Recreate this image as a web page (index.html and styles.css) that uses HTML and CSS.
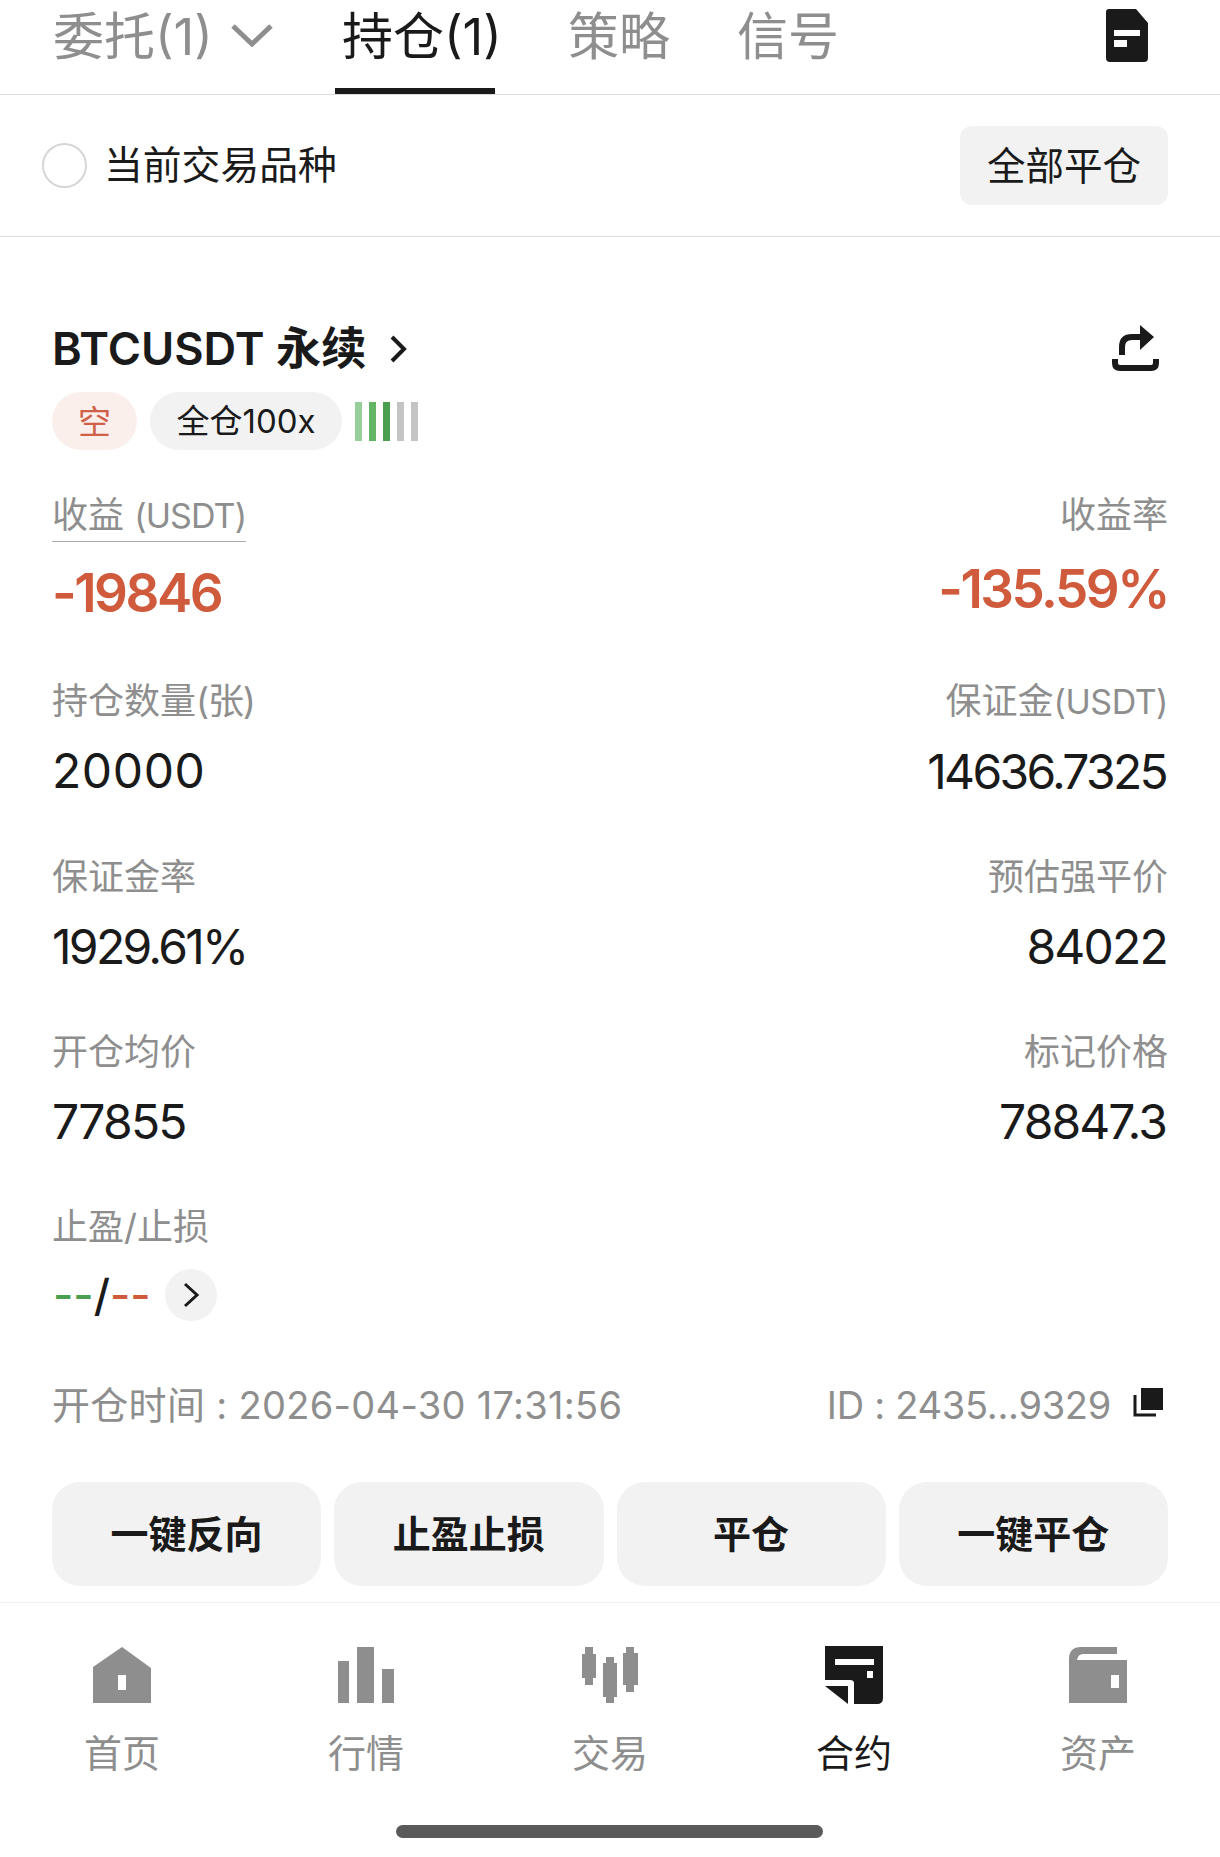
FILE: index.html
```html
<!DOCTYPE html>
<html lang="zh-CN">
<head>
<meta charset="utf-8">
<title>持仓</title>
<link rel="stylesheet" href="styles.css">
</head>
<body>
<div class="page">
  <header class="tabs">
    <div class="tab tab-orders">委托(1)
      <svg class="tab-caret" viewBox="0 0 42 24"><path d="M2 3 L21 21 L40 3" fill="none" stroke="#8e8e8e" stroke-width="5"/></svg>
    </div>
    <div class="tab tab-active">持仓(1)</div>
    <div class="tab tab-strategy">策略</div>
    <div class="tab tab-signal">信号</div>
    <svg class="doc-icon" viewBox="0 0 42 53"><path d="M3 0 H30 L42 14 V49 Q42 53 38 53 H4 Q0 53 0 49 V3 Q0 0 3 0 Z M8 21 V27 H34 V21 Z M8 31 V38 H21 V31 Z" fill="#1a1a1a" fill-rule="evenodd"/></svg>
  </header>

  <section class="filter">
    <div class="filter-left"><span class="radio"></span><span class="filter-text">当前交易品种</span></div>
    <button class="close-all">全部平仓</button>
  </section>

  <main class="card">
    <div class="title-row">
      <div class="title"><span>BTCUSDT 永续</span>
        <svg class="title-chev" viewBox="0 0 18 28"><path d="M3 2 L15 14 L3 26" fill="none" stroke="#1a1a1a" stroke-width="4"/></svg>
      </div>
      <svg class="share" viewBox="0 0 47 46"><path d="M10 30 V22 Q10 12 20 12 H30" fill="none" stroke="#1a1a1a" stroke-width="6"/><path d="M28 0 L42 12 L28 25 Z" fill="#1a1a1a"/><path d="M3 34 V38 Q3 43 8 43 H39 Q44 43 44 38 V34" fill="none" stroke="#1a1a1a" stroke-width="6"/></svg>
    </div>

    <div class="tags">
      <span class="tag tag-short">空</span>
      <span class="tag tag-lev">全仓100x</span>
      <span class="bars">
        <i class="bar b1"></i><i class="bar b2"></i><i class="bar b3"></i><i class="bar b4"></i><i class="bar b4"></i>
      </span>
    </div>

    <div class="pnl">
      <div>
        <div class="label label-under">收益 <span class="lat">(USDT)</span></div>
        <div class="big">-19846</div>
      </div>
      <div class="right">
        <div class="label">收益率</div>
        <div class="big big-right">-135.59%</div>
      </div>
    </div>

    <div class="grid">
      <div><div class="label">持仓数量<span class="paren">(张)</span></div><div class="value v-wide">20000</div></div>
      <div class="right"><div class="label">保证金<span class="lat">(USDT)</span></div><div class="value v-tight">14636.7325</div></div>
      <div><div class="label">保证金率</div><div class="value v-tight">1929.61%</div></div>
      <div class="right"><div class="label">预估强平价</div><div class="value v-mid">84022</div></div>
      <div><div class="label">开仓均价</div><div class="value v-low">77855</div></div>
      <div class="right"><div class="label">标记价格</div><div class="value v-semi">78847.3</div></div>
      <div>
        <div class="label">止盈/止损</div>
        <div class="tp">
          <span class="tp-val"><span class="green">--</span><span class="slash">/</span><span class="red">--</span></span>
          <span class="tp-btn"><svg class="tp-chev" viewBox="0 0 17 26"><path d="M2 2 L14 13 L2 24" fill="none" stroke="#1a1a1a" stroke-width="3"/></svg></span>
        </div>
      </div>
    </div>

    <div class="meta">
      <span class="meta-time">开仓时间 : 2026-04-30 17:31:56</span>
      <span class="meta-id"><span>ID : 2435...9329</span>
        <svg class="copy" viewBox="0 0 30 29"><path d="M8 0 H30 V22 H8 Z" fill="#1a1a1a"/><path d="M2 7 V27 H23" fill="none" stroke="#1a1a1a" stroke-width="3"/></svg>
      </span>
    </div>

    <div class="actions">
      <button class="act">一键反向</button>
      <button class="act">止盈止损</button>
      <button class="act">平仓</button>
      <button class="act">一键平仓</button>
    </div>
  </main>

  <nav class="nav">
    <div class="nav-items">
      <div class="nav-item">
        <svg class="nav-icon" viewBox="0 0 58 58"><path d="M0 21 L29 1 L58 22 V57 H0 Z M25 29 V44 H33 V29 Z" fill="#8e8e8e" fill-rule="evenodd"/></svg>
        <span>首页</span>
      </div>
      <div class="nav-item">
        <svg class="nav-icon" viewBox="0 0 58 58"><path d="M1 15 H12 V57 H1 Z M20 1 H37 V57 H20 Z M45 23 H57 V57 H45 Z" fill="#8e8e8e"/></svg>
        <span>行情</span>
      </div>
      <div class="nav-item">
        <svg class="nav-icon" viewBox="0 0 58 58"><path d="M4 1 H12 V8 H15 V32 H12 V39 H4 V32 H1 V8 H4 Z M25 11 H33 V17 H36 V51 H33 V57 H25 V51 H22 V17 H25 Z M45 1 H53 V7 H57 V39 H53 V46 H45 V39 H42 V7 H45 Z" fill="#8e8e8e"/></svg>
        <span>交易</span>
      </div>
      <div class="nav-item nav-active">
        <svg class="nav-icon" viewBox="0 0 58 58"><path d="M0 0 H58 V52 Q58 58 52 58 H29 V37 Q29 34 25 34 H0 Z M10 13 V19 H49 V13 Z M42 25 V32 H48 V25 Z" fill="#1a1a1a" fill-rule="evenodd"/><path d="M0 40 H23 V58 Z" fill="#1a1a1a"/></svg>
        <span>合约</span>
      </div>
      <div class="nav-item">
        <svg class="nav-icon" viewBox="0 0 58 58"><path d="M0 57 V13 Q0 1 12 1 H48 V8 H14 Q9 8 8 14 H58 V57 Z M42 29 V42 H50 V29 Z" fill="#8e8e8e" fill-rule="evenodd"/></svg>
        <span>资产</span>
      </div>
    </div>
    <div class="home-bar"></div>
  </nav>
</div>
</body>
</html>
```

FILE: styles.css
```css
* { box-sizing: border-box; }
html, body { margin: 0; padding: 0; background: #fff; }
body {
  font-family: Inter, "Noto Sans CJK SC", sans-serif;
  color: #1a1a1a;
}
.page { width: 1220px; height: 1857px; overflow: hidden; }

.tabs {
  height: 95px;
  border-bottom: 1px solid #dcdcdc;
  display: flex;
  padding-left: 53px;
}
.tab {
  font-size: 51px;
  line-height: 60px;
  color: #8e8e8e;
  white-space: nowrap;
  display: flex;
  align-items: center;
  height: 69px;
  padding-top: 5px;
  font-family: Inter, "Noto Sans CJK SC", sans-serif;
}
.tab-caret { width: 42px; height: 24px; margin-left: 18px; margin-top: -4px; }
.tab-orders { width: 282px; }
.tab-active { color: #1a1a1a; width: 233px; position: relative; padding-left: 7px; }
.tab-active::after {
  content: "";
  position: absolute;
  left: 0;
  bottom: -25px;
  width: 160px;
  height: 6px;
  background: #1a1a1a;
}
.tab-strategy { width: 169px; }
.tab-signal { width: 102px; }
.doc-icon { width: 42px; height: 53px; margin-left: 267px; margin-top: 9px; flex: none; }

.filter {
  height: 142px;
  border-bottom: 1px solid #dcdcdc;
  padding: 0 52px 0 42px;
  display: flex;
  justify-content: space-between;
  align-items: center;
}
.filter-left { display: flex; align-items: center; }
.radio {
  width: 45px;
  height: 45px;
  border: 2px solid #d6d6d6;
  border-radius: 50%;
  margin-right: 17px;
}
.filter-text { font-size: 38.8px; line-height: 50px; padding-bottom: 7px; font-family: "Noto Sans CJK SC", sans-serif; }
.close-all {
  width: 208px;
  height: 79px;
  border: 0;
  border-radius: 12px;
  background: #f2f2f2;
  font: 400 38.5px/50px "Noto Sans CJK SC", sans-serif;
  color: #1a1a1a;
  padding: 0 0 6px;
}

.card { padding: 82px 52px 0; }
.title-row { display: flex; justify-content: space-between; align-items: flex-start; }
.title {
  font-size: 45.2px;
  line-height: 60px;
  font-weight: 600;
  display: flex;
  align-items: center;
  white-space: nowrap;
}
.title-chev { width: 18px; height: 28px; margin-left: 23px; }
.share { width: 47px; height: 46px; margin-top: 6px; margin-right: 9px; }

.tags { display: flex; align-items: center; margin-top: 13px; height: 58px; }
.tag {
  height: 58px;
  border-radius: 29px;
  font: 400 33px/56px "Noto Sans CJK SC", Inter, sans-serif;
  display: flex;
  align-items: center;
  justify-content: center;
}
.tag-short { width: 85px; background: #fbefeb; color: #d0604a; padding-bottom: 3px; }
.tag-lev { width: 192px; background: #f2f2f2; margin-left: 13px; font-family: Inter, "Noto Sans CJK SC", sans-serif; }
.bars { display: flex; gap: 7px; margin-left: 13px; }
.bar { display: block; width: 7px; height: 39px; }
.b1 { background: #97cf9b; }
.b2 { background: #62b565; }
.b3 { background: #4a9e50; }
.b4 { background: #c4c4c4; }

.pnl { display: flex; justify-content: space-between; margin-top: 45px; }
.right { text-align: right; }
.label {
  font-size: 36px;
  line-height: 40px;
  color: #8e8e8e;
  white-space: nowrap;
}
.lat { font-size: 34px; letter-spacing: -0.5px; }
.paren { letter-spacing: -1.2px; }
.label-under {
  display: inline-block;
  vertical-align: top;
  padding: 0 0 5px;
  border-bottom: 1px solid #aaaaaa;
}
.label-under .lat { letter-spacing: -0.9px; }
.big {
  font-size: 53px;
  line-height: 60px;
  font-weight: 600;
  color: #cf5a3c;
  letter-spacing: -2.5px;
  margin-top: 21px;
}
.big-right { margin-top: 24px; }

.grid {
  display: grid;
  grid-template-columns: 1fr 1fr;
  row-gap: 55px;
  margin-top: 58px;
}
.value {
  font-size: 48px;
  line-height: 60px;
  margin-top: 20px;
  white-space: nowrap;
}
.right .value { padding-right: 2px; }
.right .v-mid { padding-right: 1px; }
.v-wide { letter-spacing: 0.6px; }
.v-mid { letter-spacing: -1.8px; }
.v-low { letter-spacing: -1.8px; }
.v-semi { letter-spacing: -1.9px; }
.v-tight { letter-spacing: -2.7px; }
.tp { display: flex; align-items: center; margin-top: 22px; height: 52px; }
.tp-val { font-size: 44px; font-weight: 500; line-height: 52px; width: 113px; padding-left: 1px; white-space: pre; }
.green { color: #4a9e50; }
.red { color: #cf5a3c; }
.tp-btn {
  width: 52px;
  height: 52px;
  border-radius: 50%;
  background: #f2f2f2;
  display: flex;
  align-items: center;
  justify-content: center;
}
.tp-chev { width: 17px; height: 26px; }

.meta {
  display: flex;
  justify-content: space-between;
  align-items: center;
  margin-top: 59px;
  height: 50px;
  font-size: 38px;
  line-height: 50px;
  color: #8e8e8e;
  white-space: nowrap;
}
.meta-time { letter-spacing: 0.3px; }
.meta-id { display: flex; align-items: center; letter-spacing: -0.3px; }
.copy { width: 30px; height: 29px; margin-left: 22px; margin-right: 5px; margin-top: -6px; }

.actions {
  display: grid;
  grid-template-columns: repeat(4, 1fr);
  gap: 13px;
  margin-top: 52px;
}
.act {
  height: 104px;
  border: 0;
  border-radius: 28px;
  background: #f2f2f2;
  color: #1a1a1a;
  font: 700 38px/50px "Noto Sans CJK SC", sans-serif;
  padding: 0 0 4px;
}

.nav {
  margin-top: 16px;
  height: 257px;
  border-top: 1px solid #f0f0f0;
  border-bottom: 1px solid #cccccc;
  padding-top: 43px;
}
.nav-items {
  display: grid;
  grid-template-columns: repeat(5, 244px);
}
.nav-item {
  display: flex;
  flex-direction: column;
  align-items: center;
  color: #8e8e8e;
  font: 400 38px/50px "Noto Sans CJK SC", sans-serif;
}
.nav-active { color: #1a1a1a; }
.nav-icon { width: 58px; height: 58px; margin-bottom: 22px; }
.home-bar {
  width: 427px;
  height: 13px;
  border-radius: 7px;
  background: #5a5a5a;
  margin: 49px 0 0 396px;
}
```
